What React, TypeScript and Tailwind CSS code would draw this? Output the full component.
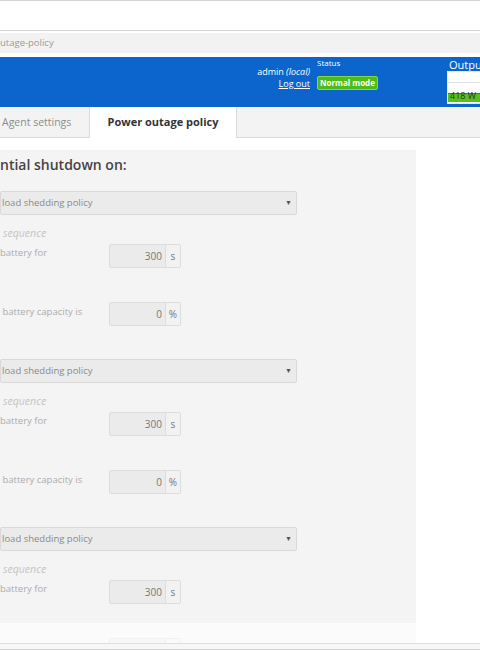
import React from "react";

const NumberField = ({ value, unit }: { value: string; unit: string }) => (
  <div className="flex h-[24px] w-[72px] rounded-[2px] border border-[#dcdcdc] text-[10px] text-[#777]">
    <div className="flex-1 bg-[#ebebeb] pr-[3px] text-right leading-[22px]">{value}</div>
    <div className="w-[15px] border-l border-[#dcdcdc] bg-[#f2f2f2] text-center leading-[22px]">{unit}</div>
  </div>
);

const PolicyBlock = () => (
  <div className="flex flex-col">
    {/* dropdown */}
    <div className="flex h-[24px] w-[297px] items-center justify-between rounded-[2px] border border-[#d9d9d9] bg-[#ebebeb] pl-[1px] pr-[4px] text-[9.5px] text-[#8a8a8a]">
      <span>load shedding policy</span>
      <span className="text-[7px] text-[#555]">▼</span>
    </div>
    <div className="mt-[10px] pl-[3px] text-[10.5px] italic leading-[16px] text-[#c4c4c4]">sequence</div>
    <div className="mt-[3px] flex items-start">
      <div className="w-[109px] pt-[1px] text-[9.5px] leading-[16px] text-[#ababab]">battery for</div>
      <NumberField value="300" unit="s" />
    </div>
    <div className="mt-[34px] flex items-start">
      <div className="w-[109px] pt-[2px] text-[9.5px] leading-[16px] text-[#ababab]">&nbsp;battery capacity is</div>
      <NumberField value="0" unit="%" />
    </div>
  </div>
);

export default function App() {
  return (
    <div className="relative h-[650px] w-[480px] overflow-hidden bg-white font-['Open_Sans',sans-serif]">
      {/* browser chrome */}
      <div className="h-[31px] border-y border-[#d4d4d4] bg-white" />
      <div className="mt-[2px] h-[20px] bg-[#f2f2f2] text-[9.5px] leading-[20px] text-[#9a9a9a]">utage-policy</div>

      {/* header bar */}
      <div className="mt-[4px] flex h-[50px] items-start bg-[#0b65cc] text-white">
        <div className="w-[310px] shrink-0 pt-[9px] text-right text-[9px] leading-[12px]">
          <div>
            admin <span className="italic">(local)</span>
          </div>
          <div className="underline">Log out</div>
        </div>
        <div className="ml-[7px] w-[130px] shrink-0 pt-[1px]">
          <div className="text-[8px] leading-[10px]">Status</div>
          <div className="mt-[1px] inline-block rounded-[2px] border border-[#7fd850] bg-[#4fbb16] px-[2px] text-[8px] font-bold leading-[12px]">
            Normal mode
          </div>
        </div>
        <div className="shrink-0 pt-[1px]">
          <div className="pl-[2px] text-[11px] leading-[13px]">Output</div>
          <div className="relative h-[33px] w-[40px] border border-[#e8e8e8] bg-white">
            <div className="mt-[10px] h-px bg-[#e0e0e0]" />
            <div className="absolute bottom-[1px] left-0 h-[9px] w-full border-t border-[#3d8a10] bg-[#56c11b]" />
            <div className="absolute bottom-[1px] left-[2px] text-[9px] leading-[13px] text-[#333]">418 W</div>
          </div>
        </div>
      </div>

      {/* tabs */}
      <div className="flex h-[31px] border-b border-[#dcdcdc] bg-[#f3f3f3]">
        <div className="w-[89px] pl-[2px] text-[10.5px] leading-[30px] text-[#8c8c8c]">Agent settings</div>
        <div className="mb-[-1px] w-[148px] border-x border-[#dcdcdc] bg-white text-center text-[11px] font-bold leading-[30px] text-[#333]">
          Power outage policy
        </div>
      </div>

      {/* content panel */}
      <div className="mt-[12px] w-[416px] bg-[#f4f4f4] pt-[5px]">
        <div className="text-[14px] font-semibold leading-[20px] text-[#444]">ntial shutdown on:</div>
        <div className="mt-[16px] flex flex-col gap-[33px]">
          <PolicyBlock />
          <PolicyBlock />
          <PolicyBlock />
        </div>
      </div>

      {/* translucent footer bar over the panel */}
      <div className="absolute left-0 top-[623px] h-[21px] w-full border-b border-[#dedede] bg-white/60" />
      <div className="absolute left-0 top-[644px] h-[6px] w-full border-b border-[#cfcfcf] bg-[#f7f7f7]" />
    </div>
  );
}
